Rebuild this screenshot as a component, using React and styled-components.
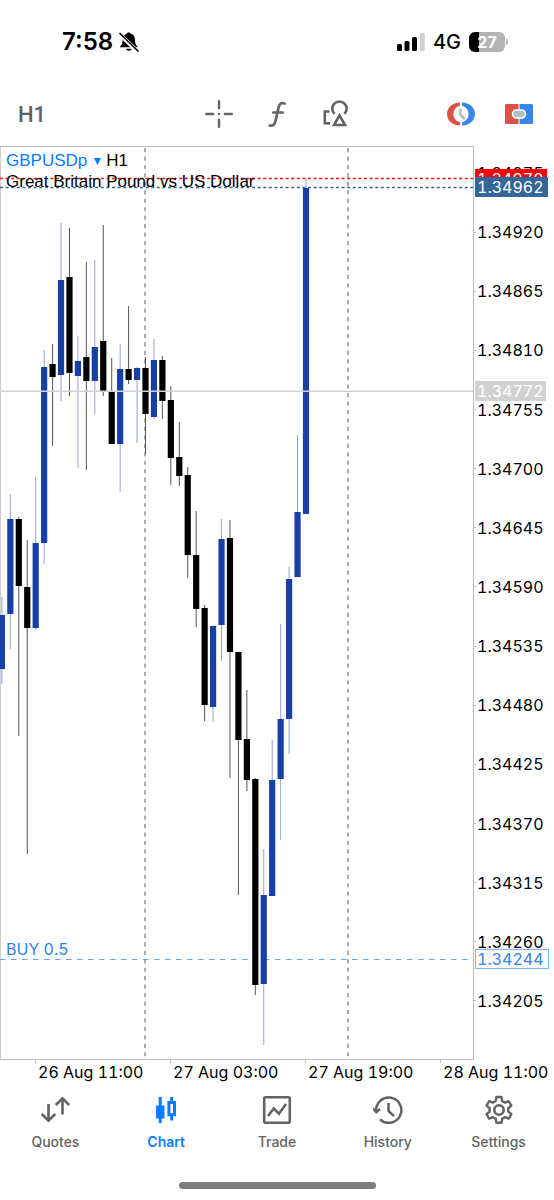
import React from 'react';
import styled, { createGlobalStyle } from 'styled-components';

const GlobalStyle = createGlobalStyle`
  * { box-sizing: border-box; }
  body { margin: 0; background: #fff; color: #000; font-family: Inter, "Liberation Sans", sans-serif; }
  button { border: 0; padding: 0; background: none; font: inherit; color: inherit; cursor: pointer; }
`;

const Page = styled.div`
  display: flex;
  flex-direction: column;
  min-height: 100vh;
  overflow: hidden;
`;

const StatusBar = styled.div`
  display: flex;
  justify-content: space-between;
  align-items: center;
  height: 82px;
  padding: 2px 49px 0 62px;
`;

const StatusGroup = styled.div`
  display: flex;
  align-items: center;
  gap: ${(p) => p.$gap}px;
`;

const Time = styled.span`
  font-size: 24px;
  line-height: 28px;
  font-weight: 600;
`;

const Network = styled.span`
  font-size: 20px;
  line-height: 28px;
  font-weight: 500;
`;

const Toolbar = styled.header`
  display: grid;
  grid-template-columns: 1fr auto 1fr;
  align-items: center;
  height: 64px;
`;

const Timeframe = styled.button`
  justify-self: start;
  height: 48px;
  padding: 0 18px;
  color: #5f5f5f;
  font-family: Roboto, "Liberation Sans", sans-serif;
  font-size: 22px;
  font-weight: 500;
`;

const ToolGroup = styled.div`
  display: flex;
  justify-self: ${(p) => (p.$end ? 'end' : 'center')};
  padding-right: ${(p) => (p.$end ? 6 : 0)}px;
`;

const ToolButton = styled.button`
  display: flex;
  align-items: center;
  justify-content: center;
  width: 58px;
  height: 48px;
  color: #636363;
`;

const ChartArea = styled.main`
  display: grid;
  grid-template-columns: 1fr 80px;
  font-variant-numeric: tabular-nums;
`;

const Plot = styled.section`
  position: relative;
  height: 914px;
  border: 1px solid #bdbdbd;
  border-width: 1px 1px 1px 0;
`;

const PlotDrawing = styled.svg`
  display: block;
  width: 100%;
  height: 100%;
`;

const Legend = styled.div`
  position: absolute;
  top: 3px;
  left: 6px;
  font-family: "Liberation Sans", Arial, sans-serif;
  font-size: 17px;
  line-height: 21px;
`;

const SymbolRow = styled.div`
  display: flex;
  align-items: center;
  gap: 5px;
`;

const SymbolButton = styled.button`
  display: flex;
  align-items: center;
  gap: 7px;
  color: #0a7aff;
`;

const PositionLabel = styled.div`
  position: absolute;
  top: 792px;
  left: 6px;
  color: #2f80e8;
  font-size: 16px;
  line-height: 20px;
`;

const PriceAxis = styled.aside`
  position: relative;
  display: flex;
  flex-direction: column;
  justify-content: space-between;
  padding: 17px 0 49px;
`;

const PriceLabel = styled.div`
  display: flex;
  align-items: center;
  gap: 1px;
  font-size: 16px;
  line-height: 20px;

  &::before {
    content: '';
    width: 2px;
    height: 1px;
    background: #bdbdbd;
  }
`;

const PriceTag = styled.div`
  position: absolute;
  top: ${(p) => p.$top}px;
  left: 1px;
  width: ${(p) => p.$width}px;
  height: 20px;
  padding-left: 1px;
  border: 1px solid ${(p) => p.$line};
  background: ${(p) => p.$fill};
  color: ${(p) => p.$ink};
  font-size: 16px;
  line-height: 18px;
`;

const TimeAxis = styled.div`
  display: flex;
  grid-column: 1 / -1;
  height: 25px;
  padding-left: 35px;
`;

const TimeLabel = styled.div`
  flex: none;
  width: 135px;
  font-size: 16px;
  line-height: 24px;
  white-space: nowrap;

  &::before {
    content: '';
    float: left;
    width: 1px;
    height: 3px;
    margin-right: 2px;
    background: #bdbdbd;
  }
`;

const TabBar = styled.nav`
  display: grid;
  grid-template-columns: repeat(5, 1fr);
`;

const Tab = styled.button`
  display: flex;
  flex-direction: column;
  align-items: center;
  gap: 7px;
  padding-top: 10px;
  color: ${(p) => (p.$active ? '#0a7aff' : '#636363')};
  font-size: 14px;
  line-height: 20px;
  font-weight: ${(p) => (p.$active ? 600 : 500)};
`;

const HomeIndicator = styled.div`
  width: 197px;
  height: 7px;
  margin: auto auto 11px;
  border-radius: 4px;
  background: #7d7d7d;
`;

/* Screen row of the top edge of the plot; candle levels are counted from the screen top. */
const ORIGIN = 147;
const BLUE = '#183fa5';

/* [rising, high, body top, body bottom, low] */
const CANDLES = [
  [1, 597, 615, 669, 684],
  [1, 494, 519, 614, 649],
  [0, 517, 519, 586, 736],
  [0, 540, 587, 628, 854],
  [1, 477, 543, 628, 630],
  [1, 350, 367, 543, 564],
  [0, 344, 364, 377, 446],
  [1, 223, 280, 375, 401],
  [0, 228, 277, 373, 396],
  [1, 336, 361, 376, 468],
  [0, 262, 357, 381, 470],
  [1, 260, 347, 381, 414],
  [0, 225, 341, 391, 396],
  [0, 358, 391, 444, 444],
  [1, 344, 369, 444, 492],
  [0, 306, 369, 380, 384],
  [1, 367, 368, 380, 443],
  [0, 357, 368, 414, 454],
  [1, 339, 360, 417, 419],
  [0, 356, 360, 401, 419],
  [0, 386, 400, 458, 485],
  [0, 422, 457, 476, 486],
  [0, 467, 475, 555, 578],
  [0, 511, 555, 609, 627],
  [0, 605, 608, 705, 721],
  [1, 625, 626, 707, 722],
  [1, 519, 539, 625, 661],
  [0, 520, 538, 652, 778],
  [0, 652, 652, 740, 895],
  [0, 690, 739, 780, 791],
  [0, 778, 779, 985, 995],
  [1, 849, 895, 984, 1045],
  [1, 740, 780, 896, 896],
  [1, 624, 719, 779, 840],
  [1, 567, 579, 719, 754],
  [1, 435, 512, 577, 577],
  [1, 178, 188, 514, 514],
];

const PRICES = Array.from({ length: 15 }, (_, i) => (1.34975 - i * 0.00055).toFixed(5));
const TIMES = ['26 Aug 11:00', '27 Aug 03:00', '27 Aug 19:00', '28 Aug 11:00'];

function Candle({ index, data }) {
  const [rising, high, top, bottom, low] = data;
  const x = 1.9 + index * 8.447;
  return (
    <g>
      <line x1={x} x2={x} y1={high - ORIGIN} y2={low - ORIGIN} stroke={rising ? '#8fa3d8' : '#555'} strokeWidth="1" />
      <rect x={x - 3.1} y={top - ORIGIN} width="6.2" height={bottom - top} fill={rising ? BLUE : '#000'} />
    </g>
  );
}

function Level({ y, color, dash, width = 1 }) {
  return <line x1="0" x2="100%" y1={y - ORIGIN} y2={y - ORIGIN} stroke={color} strokeDasharray={dash} strokeWidth={width} />;
}

function PlotLines() {
  return (
    <PlotDrawing role="img" aria-label="GBPUSDp hourly candlestick chart">
      <line x1="0.5" x2="0.5" y1="0" y2="100%" stroke="#cfcfcf" />
      {[145, 348].map((x) => (
        <line key={x} x1={x} x2={x} y1="1" y2="100%" stroke="#8a8a8a" strokeWidth="1.4" strokeDasharray="4.2 4.25" />
      ))}
      <Level y={959.5} color="#5fa8f8" dash="5.5 5.5" width={1.2} />
      {CANDLES.map((data, i) => <Candle key={i} index={i} data={data} />)}
      <Level y={391.2} color="#d2d2d2" width={1.4} />
      <Level y={178.5} color="#f01414" dash="3 2.6" width={1.4} />
      <Level y={187.5} color="#336699" dash="3 2.6" width={1.4} />
    </PlotDrawing>
  );
}

const Icon = styled.svg.attrs((p) => ({
  fill: p.fill || 'none',
  stroke: p.stroke || 'currentColor',
  'aria-hidden': true,
}))`
  display: block;
  flex: none;
`;

const BellOff = () => (
  <Icon width="22" height="24" viewBox="0 0 22 24" stroke="none">
    <path d="M2 17.2c.5-1.600 2.500-2.500 2.500-6.200C4.500 7 6 4.400 9 3.600c.2-1.400 3.300-1.400 3.600 0 3 .8 4.500 3.400 4.500 7.400 0 3.700 2 4.600 2.500 6.200z" fill="#000" />
    <path d="M7.800 18.800h6c-.7 2.500-5.300 2.500-6 0z" fill="#000" />
    <path d="M1.500 4 19.500 21.500" stroke="#fff" strokeWidth="4.200" />
    <path d="M2 3.500 20 21" stroke="#000" strokeWidth="1.700" strokeLinecap="round" />
  </Icon>
);

const Signal = () => (
  <Icon width="28" height="18" viewBox="0 0 28 18" stroke="none">
    <rect x="0" y="11" width="5" height="7" rx="1.500" fill="#000" />
    <rect x="7.500" y="8" width="5" height="10" rx="1.500" fill="#000" />
    <rect x="15" y="4" width="5" height="14" rx="1.500" fill="#000" />
    <rect x="22.700" y="0" width="5" height="18" rx="1.500" fill="#d0d0d0" />
  </Icon>
);

const Battery = styled.span`
  display: flex;
  align-items: center;
  justify-content: center;
  position: relative;
  width: 36px;
  height: 20px;
  border-radius: 6px;
  background: linear-gradient(90deg, #000 10px, #b3b3b3 10px);
  color: #fff;
  font-size: 16px;
  line-height: 20px;
  font-weight: 700;

  &::after {
    content: '';
    position: absolute;
    right: -3px;
    width: 2px;
    height: 6px;
    border-radius: 0 2px 2px 0;
    background: #b3b3b3;
  }
`;

const Crosshair = () => (
  <Icon width="28" height="28" viewBox="0 0 28 28" strokeWidth="2.400" strokeLinecap="round">
    <path d="M14 1.200v7M14 19.800v7M1.200 14h7M19.800 14h7" />
    <circle cx="14" cy="14" r="1.200" fill="currentColor" stroke="none" />
  </Icon>
);

const FunctionIcon = () => (
  <Icon width="28" height="28" viewBox="0 0 28 28" strokeWidth="2.700" strokeLinecap="round">
    <path d="M21.600 3.500c-3.200-1-5.200.3-6 3.800l-3.200 14.200c-.8 3.400-2.200 4.600-5.600 4.100M10.300 12.500h9.500" />
  </Icon>
);

const Shapes = () => (
  <Icon width="28" height="28" viewBox="0 0 28 28" strokeWidth="2.600">
    <path d="M8.600 11.500H3.800v11.700H9" />
    <path d="M13.500 13.900a7.200 7.200 0 1 1 9.900 0" />
    <path d="M18.500 15.300 13 25h11z" />
  </Icon>
);

const PendingOrder = () => (
  <Icon width="30" height="26" viewBox="0 0 30 26" stroke="none">
    <path d="M14 1.500C6.500 1.500 1 6.500 1 13s5.500 11.500 13 11.500v-3.200A8.500 8.500 0 0 1 14 4.700z" fill="#dc5145" />
    <path d="M16 1.500C23.500 1.500 29 6.500 29 13s-5.500 11.500-13 11.500v-3.200A8.500 8.500 0 0 0 16 4.700z" fill="#3787e8" />
    <path d="M14.500 7.500v6.500l4.500 4" stroke="#b4bcc2" strokeWidth="2.600" />
  </Icon>
);

const TradePanel = () => (
  <Icon width="30" height="22" viewBox="0 0 30 22" stroke="none">
    <path d="M14.500 1v20H2.500A1.500 1.500 0 0 1 1 19.500v-17A1.500 1.500 0 0 1 2.500 1z" fill="#dc5145" />
    <path d="M15.500 1v20h12a1.500 1.500 0 0 0 1.500-1.500v-17A1.500 1.500 0 0 0 27.500 1z" fill="#3787e8" />
    <rect x="8.500" y="6.900" width="13" height="8.200" rx="4" fill="#b4bcc2" stroke="#fff" strokeWidth="1.500" />
  </Icon>
);

const QuotesIcon = () => (
  <Icon width="30" height="30" viewBox="0 0 30 30" strokeWidth="2.600">
    <path d="M8.500 9v16M1.800 19l6.700 6.700 6.700-6.700M22.500 19.500V3M15.800 10l6.700-6.700 6.700 6.700" />
  </Icon>
);

const ChartIcon = () => (
  <Icon width="30" height="30" viewBox="0 0 30 30" strokeWidth="3">
    <path d="M9.200 2v26M20.700 2v5M20.700 21v4.500" />
    <path d="M5 10.500h8.500v13H5z" fill="currentColor" stroke="none" />
    <path d="M17.900 7.500h5.600v12.300h-5.600z" />
  </Icon>
);

const TradeIcon = () => (
  <Icon width="30" height="30" viewBox="0 0 30 30" strokeWidth="2.600">
    <rect x="2.200" y="2.200" width="25.600" height="25.600" rx="1.500" />
    <path d="M6 21 11.800 13.500 17 18.800 24 9" />
  </Icon>
);

const HistoryIcon = () => (
  <Icon width="30" height="30" viewBox="0 0 30 30" strokeWidth="2.500">
    <path d="M3.200 16.500A12.600 12.600 0 1 1 7 24.300" />
    <path d="M.2 13.500 3.300 17.300 7 14" />
    <path d="M15.500 8v8l5.500 5.200" />
  </Icon>
);

const SettingsIcon = () => (
  <Icon width="30" height="30" viewBox="0 0 30 30" strokeWidth="2.600" strokeLinejoin="round">
    <path d="M12.300 2.200h5.400l.8 4.300 3 1.700 4.100-1.500 2.700 4.700-3.300 2.800v3.600l3.300 2.800-2.700 4.700-4.100-1.500-3 1.700-.8 4.300h-5.400l-.8-4.300-3-1.700-4.100 1.500-2.700-4.700L5 17.800v-3.600l-3.300-2.800 2.700-4.700 4.100 1.500 3-1.700z" transform="translate(1 0) scale(.93)" />
    <circle cx="15" cy="15" r="4.700" />
  </Icon>
);

const TABS = [
  ['Quotes', QuotesIcon],
  ['Chart', ChartIcon],
  ['Trade', TradeIcon],
  ['History', HistoryIcon],
  ['Settings', SettingsIcon],
];

export default function App() {
  return (
    <Page>
      <GlobalStyle />
      <StatusBar>
        <StatusGroup $gap={5}>
          <Time>7:58</Time>
          <BellOff />
        </StatusGroup>
        <StatusGroup $gap={8}>
          <Signal />
          <Network>4G</Network>
          <Battery>27</Battery>
        </StatusGroup>
      </StatusBar>

      <Toolbar>
        <Timeframe>H1</Timeframe>
        <ToolGroup>
          <ToolButton aria-label="Crosshair"><Crosshair /></ToolButton>
          <ToolButton aria-label="Indicators"><FunctionIcon /></ToolButton>
          <ToolButton aria-label="Objects"><Shapes /></ToolButton>
        </ToolGroup>
        <ToolGroup $end>
          <ToolButton aria-label="Pending order"><PendingOrder /></ToolButton>
          <ToolButton aria-label="One-click trading"><TradePanel /></ToolButton>
        </ToolGroup>
      </Toolbar>

      <ChartArea>
        <Plot>
          <PlotLines />
          <Legend>
            <SymbolRow>
              <SymbolButton>
                GBPUSDp
                <Icon width="7" height="8" viewBox="0 0 7 8" stroke="none"><path d="M0 1h7L3.500 8z" fill="currentColor" /></Icon>
              </SymbolButton>
              <span>H1</span>
            </SymbolRow>
            <div>Great Britain Pound vs US Dollar</div>
          </Legend>
          <PositionLabel>BUY 0.5</PositionLabel>
        </Plot>
        <PriceAxis>
          {PRICES.map((price) => <PriceLabel key={price}>{price}</PriceLabel>)}
          <PriceTag $top={23} $width={72} $fill="#fb0007" $line="#fb0007" $ink="#fff">1.34970</PriceTag>
          <PriceTag $top={31} $width={73} $fill="#336699" $line="#336699" $ink="#fff">1.34962</PriceTag>
          <PriceTag $top={235} $width={71} $fill="#d2d2d2" $line="#d2d2d2" $ink="#fff">1.34772</PriceTag>
          <PriceTag $top={803} $width={74} $fill="#fff" $line="#7db4f8" $ink="#2f80e8">1.34244</PriceTag>
        </PriceAxis>
        <TimeAxis>
          {TIMES.map((time) => <TimeLabel key={time}>{time}</TimeLabel>)}
        </TimeAxis>
      </ChartArea>

      <TabBar>
        {TABS.map(([name, Glyph]) => (
          <Tab key={name} $active={name === 'Chart'}>
            <Glyph />
            {name}
          </Tab>
        ))}
      </TabBar>
      <HomeIndicator />
    </Page>
  );
}
